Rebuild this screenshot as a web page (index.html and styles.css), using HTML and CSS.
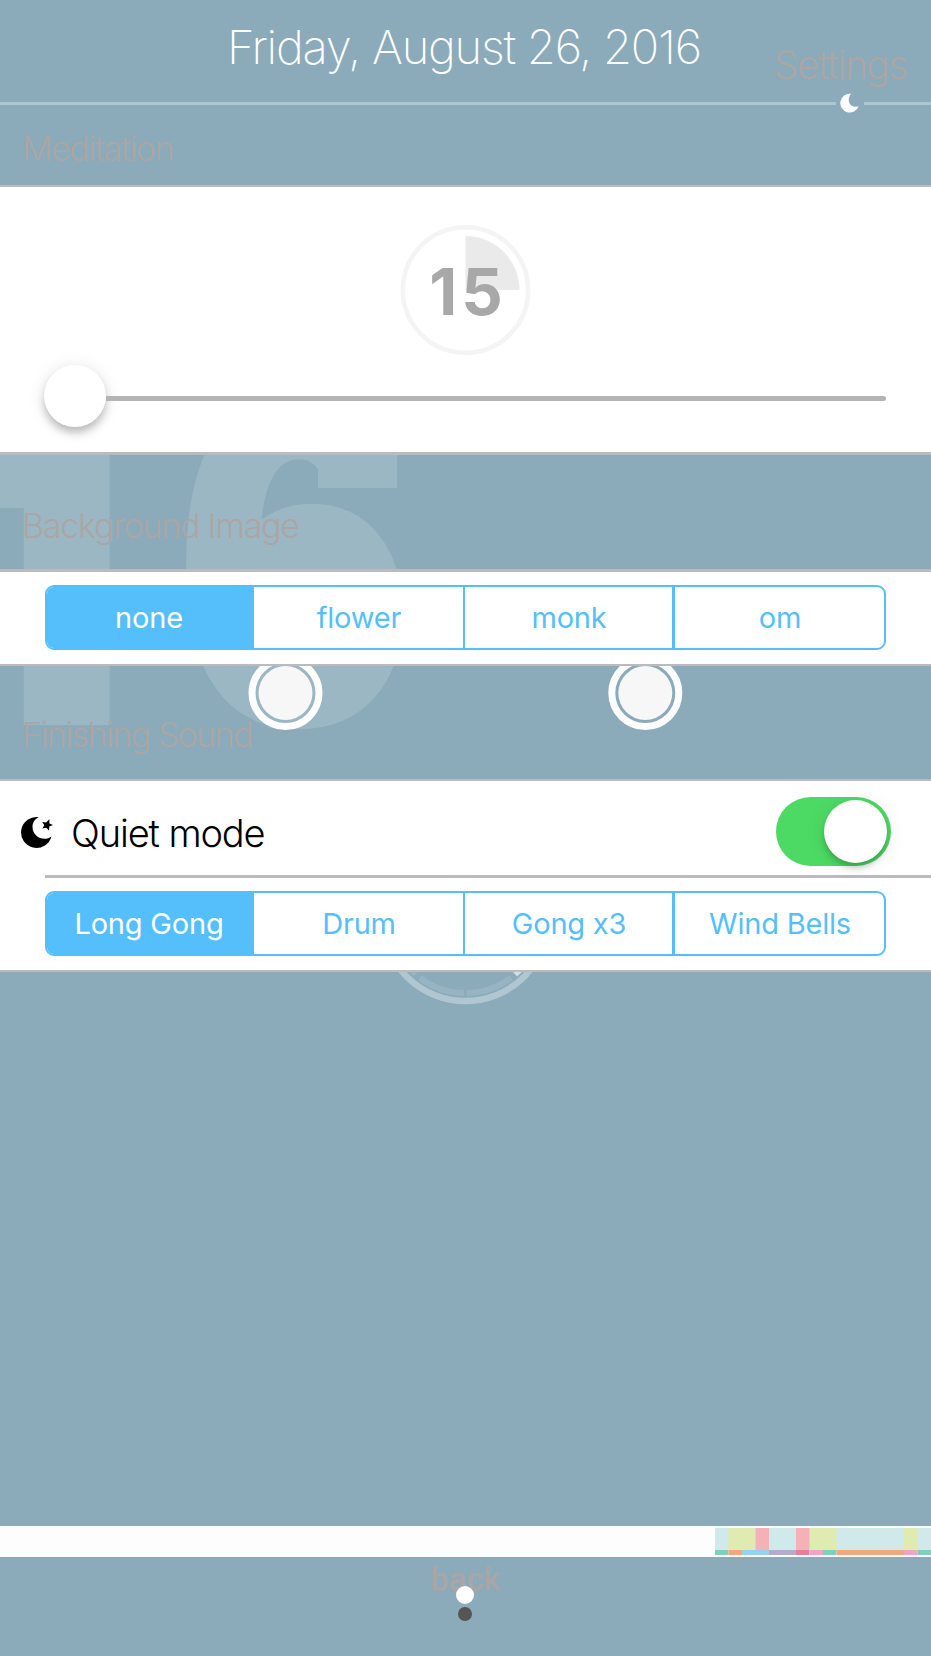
FILE: index.html
```html
<!DOCTYPE html>
<html lang="en">
<head>
<meta charset="utf-8">
<title>Settings</title>
<link rel="stylesheet" href="styles.css">
</head>
<body>
<main class="screen">
  <svg class="backdrop" viewBox="0 0 931 1656" aria-hidden="true">
    <g class="day">
      <rect x="0" y="440" width="30" height="68"/>
      <text class="one" x="138" y="725" text-anchor="end">1</text>
      <text class="six" transform="translate(181 714) scale(.98 1.085)">6</text>
      <rect x="318" y="452" width="79" height="36"/>
      <path class="notch" d="M397 452H410V496H318V488H397Z"/>
    </g>
    <g class="knob">
      <circle cx="285.5" cy="693" r="33.5"/><circle class="core" cx="285.5" cy="693" r="27"/>
      <circle cx="645.3" cy="693" r="33.5"/><circle class="core" cx="645.3" cy="693" r="27"/>
    </g>
    <g fill="none">
      <circle cx="465.5" cy="918" r="83" stroke="#b0c7d1" stroke-width="6.5"/>
      <path d="M420 978A75 75 0 0 0 464 993M467 993A75 75 0 0 0 511 978M410 969L416 974" stroke="#96b4c1" stroke-width="6"/>
      <path d="M513 972H522L517 976.500Z" fill="#d0e0e6"/>
    </g>
  </svg>

  <header class="top">
    <h1 class="date">Friday, August 26, 2016</h1>
    <span class="settings">Settings</span>
    <div class="rule">
      <i class="rule-left"></i>
      <svg class="moon" viewBox="0 0 20 20"><path d="M11 .8A9.400 9.400 0 1 0 18.600 13.200C12 15.500 5 9 11 .8Z" fill="#fff"/></svg>
      <i class="rule-right"></i>
    </div>
    <h2 class="label label-first">Meditation</h2>
  </header>

  <section class="panel timer">
    <div class="dial">
      <svg class="dial-art" viewBox="0 0 130 130"><circle cx="65.500" cy="65" r="62.700" fill="none" stroke="#f4f4f4" stroke-width="4.600"/><path d="M65.500 65V11A54 54 0 0 1 119.500 65Z" fill="#eaeaea"/></svg>
      <span class="minutes">15</span>
    </div>
    <div class="slider"><i class="thumb"></i><i class="track"></i></div>
  </section>

  <h2 class="label label-image">Background Image</h2>
  <section class="panel choices image-choices">
    <div class="segments"><b class="on">none</b><b>flower</b><b>monk</b><b>om</b></div>
  </section>

  <h2 class="label label-sound">Finishing Sound</h2>
  <section class="panel choices sound">
    <div class="quiet">
      <svg class="quiet-icon" viewBox="0 0 32 32"><path d="M18 1.100A15.500 15.500 0 1 0 30.500 20.500C23 26 11.500 21 11.500 11C11.500 6.500 14 3 18 1.100Z"/><path d="M28.400 3.200V7.400L32 9.100L28.300 10.600L28 14.500L25.200 11.700L21.400 12.600L23.300 9.200L21.200 5.900L25 6.600Z"/></svg>
      <span class="quiet-text">Quiet mode</span>
      <div class="switch"><i class="switch-knob"></i></div>
    </div>
    <hr class="divider">
    <div class="segments"><b class="on">Long Gong</b><b>Drum</b><b>Gong x3</b><b>Wind Bells</b></div>
  </section>

  <div class="space"></div>
  <div class="strip">
    <svg class="chart" viewBox="0 0 216 27" preserveAspectRatio="none">
      <path fill="#d0e9eb" d="M0 0H216V22H0Z"/>
      <path fill="#e0ebb1" d="M13.500 0h27v22h-27zM94.500 0h27v22h-27zM189 0h13.500v22h-13.500z"/>
      <path fill="#f4b2b6" d="M40.500 0H54V22H40.500zM81 0H94.500V22H81z"/>
      <path fill="#7fcebe" d="M0 22H13.500V27H0zM108 22h13.500v5H108zM202.500 22H216v5h-13.500z"/>
      <path fill="#f3a780" d="M13.500 22H27v5H13.500zM121.500 22H189v5h-67.500z"/>
      <path fill="#95d2eb" d="M27 22h27v5H27z"/>
      <path fill="#b7aad0" d="M54 22h27v5H54z"/>
      <path fill="#e97e9b" d="M81 22h13.500v5H81z"/>
      <path fill="#f0a4c7" d="M94.500 22H108v5H94.500zM189 22h13.500v5H189z"/>
    </svg>
  </div>
  <footer class="bottom">
    <span class="back">back</span>
    <i class="dot"></i>
    <i class="dot dark"></i>
  </footer>
</main>
</body>
</html>
```
FILE: styles.css
```css
* { box-sizing: border-box; }
body { margin: 0; }
h1, h2 { margin: 0; font-weight: 200; }
i { display: block; }
.screen {
  position: relative;
  display: flex;
  flex-direction: column;
  width: 931px;
  height: 1656px;
  overflow: hidden;
  background: #8babba;
  font-family: Inter, "Liberation Sans", sans-serif;
  white-space: nowrap;
}
.backdrop { position: absolute; top: 0; left: 0; width: 931px; height: 1656px; }
.screen > :not(.backdrop) { position: relative; flex-shrink: 0; }
.day { fill: #9bb7c3; }
.one { font: 800 500px Inter, sans-serif; }
.six { font: bold 415px "Liberation Sans", sans-serif; stroke: #9bb7c3; stroke-width: 20px; }
.notch { fill: #8babba; }
.knob circle { fill: none; stroke: #fdfdfd; stroke-width: 7; }
.knob .core { fill: #f7f7f7; stroke: none; }

.top { height: 185px; padding-top: 17px; }
.date {
  height: 60px;
  padding-left: 227px;
  color: #fff;
  font-size: 47px;
  line-height: 60px;
  letter-spacing: -1.22px;
}
.settings {
  position: absolute;
  top: 41px;
  right: 24px;
  color: #aaa6a6;
  font-size: 39px;
  font-weight: 300;
  line-height: 48px;
  letter-spacing: -1.5px;
}
.rule { display: flex; align-items: center; height: 20px; margin-top: 16px; }
.rule-left { width: 836px; height: 3px; background: #afc5cf; }
.rule-right { flex: 1; height: 3px; background: #afc5cf; }
.moon { width: 20px; height: 20px; margin: 0 4px 0 4px; }
.label {
  padding-left: 22px;
  color: #aaa6a6;
  font-size: 34px;
  font-weight: 300;
  line-height: 44px;
  letter-spacing: -1.5px;
}
.label-first { margin-top: 14px; }
.label-image { height: 114px; padding-top: 49px; letter-spacing: -1.25px; }
.label-sound { height: 113px; padding-top: 47px; letter-spacing: -1.58px; }

.panel { border: solid #bababf; border-width: 2px 0; background: #fff; }
.timer { height: 270px; border-bottom-width: 3px; padding-top: 38px; }
.dial {
  display: grid;
  place-items: center;
  width: 130px;
  height: 130px;
  margin-left: 400px;
}
.dial > * { grid-area: 1 / 1; }
.dial-art { width: 130px; height: 130px; overflow: visible; }
.minutes {
  padding: 3px 0 0 6px;
  color: #a8a8a8;
  font-size: 65px;
  font-weight: 700;
  line-height: 78px;
  letter-spacing: 4px;
}
.slider { display: flex; align-items: center; height: 62px; margin: 10px 45px 0 44px; }
.thumb {
  width: 62px;
  height: 62px;
  border-radius: 50%;
  background: #fff;
  box-shadow: 0 6px 8px -1px rgba(0, 0, 0, .24), 0 2px 18px rgba(0, 0, 0, .11);
}
.track { flex: 1; height: 5px; margin-top: 5px; border-radius: 0 3px 3px 0; background: #b4b4b4; }
.choices { padding-top: 13px; }
.image-choices { height: 97px; border-top-width: 3px; }
.segments {
  display: grid;
  grid-template-columns: 207px 211px 210px 1fr;
  width: 841px;
  height: 65px;
  margin-left: 45px;
  border: 2px solid #55bffb;
  border-radius: 9px;
  overflow: hidden;
  background: #fff;
  color: #55bffb;
  font-size: 29px;
  line-height: 62px;
  text-align: center;
}
.segments b { font-weight: 400; letter-spacing: -.2px; padding-left: 1px; }
.segments b:nth-child(2) { border-right: 2px solid #55bffb; }
.segments b:nth-child(3) { border-right: 3px solid #55bffb; }
.segments .on { background: #55bffb; color: #fff; padding-right: 4px; }
.sound { height: 193px; padding-top: 0; }
.quiet { display: flex; align-items: center; height: 94px; padding: 0 40px 0 21px; }
.quiet-icon { width: 32px; height: 32px; margin-top: 7px; }
.quiet-text {
  flex: 1;
  padding: 9px 0 0 18px;
  font-size: 38px;
  font-weight: 300;
  line-height: 46px;
  letter-spacing: -1.12px;
}
.switch { width: 115px; height: 69px; margin-top: 6px; padding: 3px 4px 4px 48px; border-radius: 35px; background: #4dda64; }
.switch-knob { width: 63px; height: 63px; border-radius: 50%; background: #fff; box-shadow: 0 5px 6px -1px rgba(0, 0, 0, .22), 0 2px 20px rgba(0, 0, 0, .1); }
.divider { height: 3px; margin: 0 0 13px 45px; border: 0; background: #bababf; }
.space { height: 554px; }
.strip { height: 31px; padding: 2px 0 0 715px; background: #fdfdfd; }
.chart { display: block; width: 216px; height: 27px; }
.bottom { display: flex; flex-direction: column; align-items: center; width: 930px; height: 99px; padding-top: 5px; }
.back { margin-left: 1px; color: #aaa6a6; font: 31px/36px "Liberation Sans", sans-serif; -webkit-text-stroke: 1px #aaa6a6; letter-spacing: 1px; }
.dot { width: 18px; height: 18px; margin-top: -12px; border-radius: 50%; background: #fff; }
.dark { width: 14px; height: 14px; margin: 3px 0 0 0; background: #555; }
```
